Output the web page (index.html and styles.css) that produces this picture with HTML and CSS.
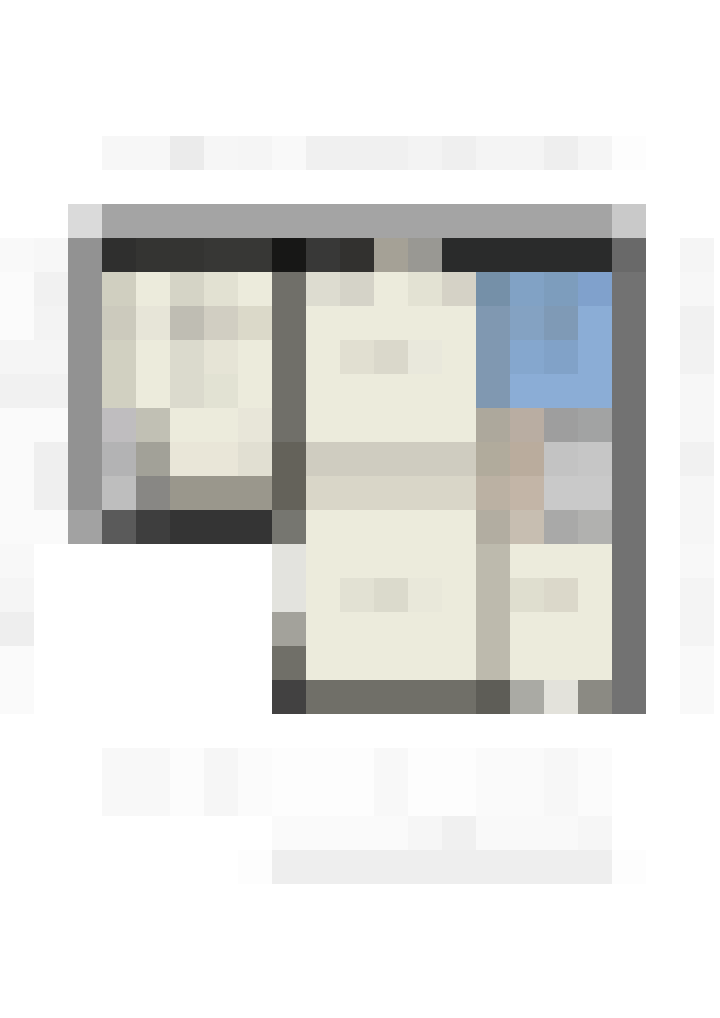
FILE: index.html
```
<!DOCTYPE html>
<html lang="en">
<head>
  <meta charset="UTF-8">
  <meta name="viewport" content="width=device-width, initial-scale=1.0">
  <title>Floor plan</title>
  <link rel="stylesheet" href="styles.css">
</head>
<body>
  <main>
    <svg class="plan" viewBox="0 0 720 1018" role="img" aria-label="Floor plan">
      <!-- one unit = one block of the plan -->
      <g transform="scale(34)">
        <!-- top labels -->
        <g>
          <path fill="#f7f7f7" d="M3 4h2v1h-2z"/>
          <path fill="#ebebeb" d="M5 4h1v1h-1z"/>
          <path fill="#f6f6f6" d="M6 4h1v1h-1z"/>
          <path fill="#f5f5f5" d="M7 4h1v1h-1z"/>
          <path fill="#f9f9f9" d="M8 4h1v1h-1z"/>
          <path fill="#f0f0f0" d="M9 4h3v1h-3z"/>
          <path fill="#f3f3f3" d="M12 4h1v1h-1z"/>
          <path fill="#efefef" d="M13 4h1v1h-1z"/>
          <path fill="#f4f4f4" d="M14 4h2v1h-2z"/>
          <path fill="#eeeeee" d="M16 4h1v1h-1z"/>
          <path fill="#f5f5f5" d="M17 4h1v1h-1z"/>
          <path fill="#fdfdfd" d="M18 4h1v1h-1z"/>
        </g>

        <!-- left labels -->
        <g>
          <path fill="#f9f9f9" d="M0 7h1v1h-1z"/>
          <path fill="#fbfbfb" d="M0 8h1v2h-1z"/>
          <path fill="#f5f5f5" d="M0 10h2v1h-2z"/>
          <path fill="#f1f1f1" d="M0 11h2v1h-2z"/>
          <path fill="#fafafa" d="M0 12h2v4h-2z"/>
          <path fill="#f8f8f8" d="M0 16h1v1h-1z"/>
          <path fill="#f5f5f5" d="M0 17h1v1h-1z"/>
          <path fill="#eeeeee" d="M0 18h1v1h-1z"/>
          <path fill="#fafafa" d="M0 19h1v2h-1z"/>
          <path fill="#f7f7f7" d="M1 7h1v1h-1z"/>
          <path fill="#f1f1f1" d="M1 8h1v1h-1z"/>
          <path fill="#f3f3f3" d="M1 9h1v1h-1z"/>
          <path fill="#efefef" d="M1 13h1v2h-1z"/>
        </g>

        <!-- right labels -->
        <g>
          <path fill="#f5f5f5" d="M20 7h1v1h-1z"/>
          <path fill="#f7f7f7" d="M20 8h1v1h-1z"/>
          <path fill="#f1f1f1" d="M20 9h1v1h-1z"/>
          <path fill="#f2f2f2" d="M20 10h1v1h-1z"/>
          <path fill="#f7f7f7" d="M20 11h1v2h-1z"/>
          <path fill="#f1f1f1" d="M20 13h1v1h-1z"/>
          <path fill="#f6f6f6" d="M20 14h1v2h-1z"/>
          <path fill="#f8f8f8" d="M20 16h1v1h-1z"/>
          <path fill="#f4f4f4" d="M20 17h1v2h-1z"/>
          <path fill="#f9f9f9" d="M20 19h1v2h-1z"/>
        </g>

        <!-- floors -->
        <path class="floor" d="M3 8h5v6h-5zM9 8h5v12h-5zM15 16h3v4h-3z"/>

        <!-- outer walls -->
        <g>
          <path fill="#dadada" d="M2 6h1v1h-1z"/>
          <path fill="#a4a4a4" d="M3 6h15v1h-15z"/>
          <path fill="#c9c9c9" d="M18 6h1v1h-1z"/>
          <path fill="#929292" d="M2 7h1v8h-1z"/>
          <path fill="#a2a2a2" d="M2 15h1v1h-1z"/>
          <path fill="#696969" d="M18 7h1v1h-1z"/>
          <path fill="#727272" d="M18 8h1v13h-1z"/>
          <path fill="#2f2f2e" d="M3 7h1v1h-1z"/>
          <path fill="#343432" d="M4 7h2v1h-2z"/>
          <path fill="#373735" d="M6 7h2v1h-2z"/>
          <path fill="#171716" d="M8 7h1v1h-1z"/>
          <path fill="#383837" d="M9 7h1v1h-1z"/>
          <path fill="#32312f" d="M10 7h1v1h-1z"/>
          <path fill="#a5a196" d="M11 7h1v1h-1z"/>
          <path fill="#999893" d="M12 7h1v1h-1z"/>
          <path fill="#2a2b2b" d="M13 7h5v1h-5z"/>
        </g>

        <!-- left room -->
        <g>
          <path fill="#d0cfc0" d="M3 8h1v1h-1z"/>
          <path fill="#cccabd" d="M3 9h1v1h-1z"/>
          <path fill="#d1d0c1" d="M3 10h1v2h-1z"/>
          <path fill="#e7e5d8" d="M4 9h1v1h-1z"/>
          <path fill="#d5d4c6" d="M5 8h1v1h-1z"/>
          <path fill="#e2e1d2" d="M6 8h1v1h-1z"/>
          <path fill="#bfbdb3" d="M5 9h1v1h-1z"/>
          <path fill="#d1cec2" d="M6 9h1v1h-1z"/>
          <path fill="#dbd9c9" d="M7 9h1v1h-1z"/>
          <path fill="#dbdacd" d="M5 10h1v2h-1z"/>
          <path fill="#e6e4d6" d="M6 10h1v1h-1z"/>
          <path fill="#e2e2d3" d="M6 11h1v1h-1z"/>
          <path fill="#bfbdbf" d="M3 12h1v1h-1z"/>
          <path fill="#c1c0b4" d="M4 12h1v1h-1z"/>
          <path fill="#e8e6d9" d="M7 12h1v1h-1z"/>
          <path fill="#b3b3b4" d="M3 13h1v1h-1z"/>
          <path fill="#a2a198" d="M4 13h1v1h-1z"/>
          <path fill="#e9e6d8" d="M5 13h2v1h-2z"/>
          <path fill="#e1dfd2" d="M7 13h1v1h-1z"/>
          <path fill="#bebebe" d="M3 14h1v1h-1z"/>
          <path fill="#888784" d="M4 14h1v1h-1z"/>
          <path fill="#9a978c" d="M5 14h3v1h-3z"/>
          <path fill="#5a5a5a" d="M3 15h1v1h-1z"/>
          <path fill="#3e3e3e" d="M4 15h1v1h-1z"/>
          <path fill="#343434" d="M5 15h3v1h-3z"/>
        </g>

        <!-- wall between left and middle -->
        <g>
          <path fill="#706f69" d="M8 8h1v5h-1z"/>
          <path fill="#64625a" d="M8 13h1v2h-1z"/>
          <path fill="#767670" d="M8 15h1v1h-1z"/>
          <path fill="#e3e3de" d="M8 16h1v2h-1z"/>
          <path fill="#a3a29b" d="M8 18h1v1h-1z"/>
          <path fill="#706f68" d="M8 19h1v1h-1z"/>
          <path fill="#424141" d="M8 20h1v1h-1z"/>
        </g>

        <!-- middle rooms -->
        <g>
          <path fill="#dddcd0" d="M9 8h1v1h-1z"/>
          <path fill="#d5d3c8" d="M10 8h1v1h-1z"/>
          <path fill="#e3e2d3" d="M12 8h1v1h-1z"/>
          <path fill="#d5d2c6" d="M13 8h1v1h-1z"/>
          <path fill="#e1dfd1" d="M10 10h1v1h-1z"/>
          <path fill="#dad8cb" d="M11 10h1v1h-1z"/>
          <path fill="#e9e8dc" d="M12 10h1v1h-1z"/>
          <path fill="#cfccc0" d="M9 13h5v1h-5z"/>
          <path fill="#d9d6c8" d="M9 14h5v1h-5z"/>
          <path fill="#e2e1d3" d="M10 17h1v1h-1z"/>
          <path fill="#dbdacc" d="M11 17h1v1h-1z"/>
          <path fill="#e9e8da" d="M12 17h1v1h-1z"/>
          <path fill="#706f68" d="M9 20h5v1h-5z"/>
        </g>

        <!-- blue room -->
        <g>
          <path fill="#8badd6" d="M15 8h3v4h-3z"/>
          <path fill="#7590a8" d="M14 8h1v1h-1z"/>
          <path fill="#8098b1" d="M14 9h1v3h-1z"/>
          <path fill="#81a2c5" d="M15 8h1v1h-1z"/>
          <path fill="#7d9dbd" d="M16 8h1v1h-1z"/>
          <path fill="#80a1cc" d="M17 8h1v1h-1z"/>
          <path fill="#84a2c2" d="M15 9h1v1h-1z"/>
          <path fill="#7f9ab6" d="M16 9h1v1h-1z"/>
          <path fill="#85a7ce" d="M15 10h1v1h-1z"/>
          <path fill="#81a2c8" d="M16 10h1v1h-1z"/>
        </g>

        <!-- hall and stairs -->
        <g>
          <path fill="#ada89c" d="M14 12h1v1h-1z"/>
          <path fill="#b9ada2" d="M15 12h1v1h-1z"/>
          <path fill="#9e9e9e" d="M16 12h1v1h-1z"/>
          <path fill="#a2a3a3" d="M17 12h1v1h-1z"/>
          <path fill="#b1ab9c" d="M14 13h1v1h-1z"/>
          <path fill="#baac9d" d="M15 13h1v1h-1z"/>
          <path fill="#c3c3c3" d="M16 13h1v1h-1z"/>
          <path fill="#c6c6c6" d="M17 13h1v1h-1z"/>
          <path fill="#bbb1a3" d="M14 14h1v1h-1z"/>
          <path fill="#c3b5a7" d="M15 14h1v1h-1z"/>
          <path fill="#c9c9c9" d="M16 14h2v1h-2z"/>
          <path fill="#b2ada1" d="M14 15h1v1h-1z"/>
          <path fill="#c7beb1" d="M15 15h1v1h-1z"/>
          <path fill="#a9a9a8" d="M16 15h1v1h-1z"/>
          <path fill="#b1b1af" d="M17 15h1v1h-1z"/>
        </g>

        <!-- bottom right room -->
        <g>
          <path fill="#bdbaad" d="M14 16h1v4h-1z"/>
          <path fill="#dfdecf" d="M15 17h1v1h-1z"/>
          <path fill="#dbd8ca" d="M16 17h1v1h-1z"/>
          <path fill="#5e5d57" d="M14 20h1v1h-1z"/>
          <path fill="#aaaaa4" d="M15 20h1v1h-1z"/>
          <path fill="#e3e2db" d="M16 20h1v1h-1z"/>
          <path fill="#8b8a83" d="M17 20h1v1h-1z"/>
        </g>

        <!-- bottom labels -->
        <g>
          <path fill="#f8f8f8" d="M3 22h2v2h-2z"/>
          <path fill="#fcfcfc" d="M5 22h1v2h-1z"/>
          <path fill="#f6f6f6" d="M6 22h1v2h-1z"/>
          <path fill="#fbfbfb" d="M7 22h1v2h-1z"/>
          <path fill="#fdfdfd" d="M8 22h3v2h-3z"/>
          <path fill="#f8f8f8" d="M11 22h1v2h-1z"/>
          <path fill="#fdfdfd" d="M12 22h2v2h-2z"/>
          <path fill="#fafafa" d="M14 22h2v2h-2z"/>
          <path fill="#f7f7f7" d="M16 22h1v2h-1z"/>
          <path fill="#fbfbfb" d="M17 22h1v2h-1z"/>
          <path fill="#fafafa" d="M8 24h4v1h-4z"/>
          <path fill="#f6f6f6" d="M12 24h1v1h-1z"/>
          <path fill="#f0f0f0" d="M13 24h1v1h-1z"/>
          <path fill="#f9f9f9" d="M14 24h3v1h-3z"/>
          <path fill="#f6f6f6" d="M17 24h1v1h-1z"/>
          <path fill="#fdfdfd" d="M7 25h1v1h-1z"/>
          <path fill="#eeeeee" d="M8 25h10v1h-10z"/>
          <path fill="#fdfdfd" d="M18 25h1v1h-1z"/>
        </g>
      </g>
    </svg>
  </main>
</body>
</html>
```
FILE: styles.css
```
body {
  margin: 0;
  background-color: white;
  font-family: "Liberation Sans", Arial, sans-serif;
}
.plan {
  display: block;
  width: 100%;
  height: auto;
  shape-rendering: crispEdges;
}
.floor {
  fill: #ecebdc;
}
```
